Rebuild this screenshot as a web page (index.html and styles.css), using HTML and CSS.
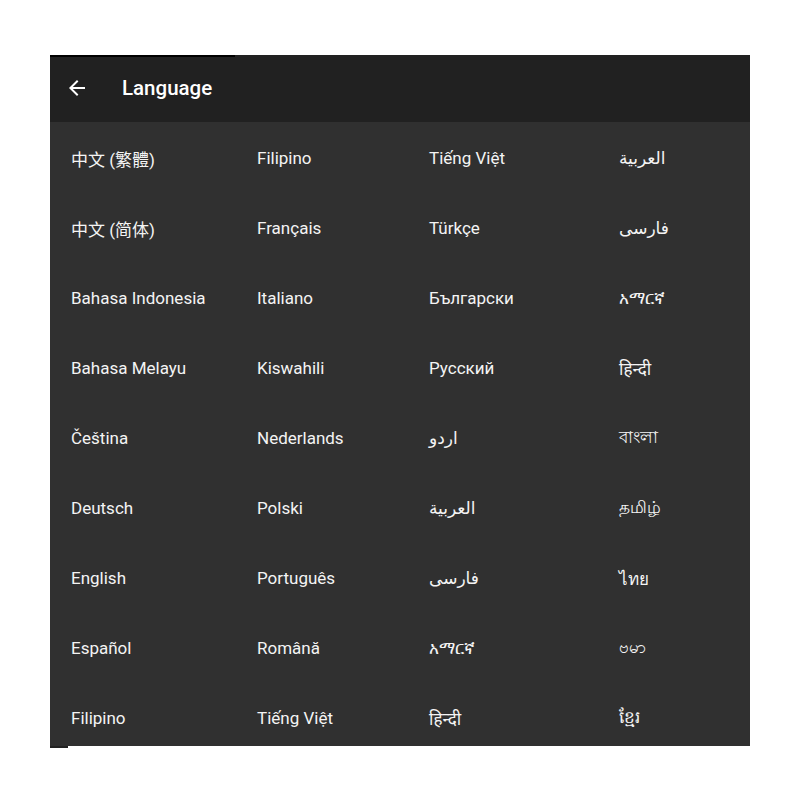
FILE: index.html
```html
<!DOCTYPE html>
<html>
<head>
<meta charset="utf-8">
<link rel="stylesheet" href="styles.css">
</head>
<body>
<div class="panel">
  <div class="header">
    <div class="progress"></div>
    <div class="bar">
      <svg class="back" width="24" height="24" viewBox="0 0 24 24"><path d="M20 11H7.83l5.59-5.59L12 4l-8 8 8 8 1.41-1.41L7.83 13H20v-2z" fill="#fff"/></svg>
      <span class="title">Language</span>
    </div>
  </div>
  <div class="list">
    <div class="grid">
      <span>中文 (繁體)</span><span>Filipino</span><span>Tiếng Việt</span><span>العربية</span>
      <span>中文 (简体)</span><span>Français</span><span>Türkçe</span><span>فارسی</span>
      <span>Bahasa Indonesia</span><span>Italiano</span><span>Български</span><span>አማርኛ</span>
      <span>Bahasa Melayu</span><span>Kiswahili</span><span>Русский</span><span>हिन्दी</span>
      <span>Čeština</span><span>Nederlands</span><span>اردو</span><span>বাংলা</span>
      <span>Deutsch</span><span>Polski</span><span>العربية</span><span>தமிழ்</span>
      <span>English</span><span>Português</span><span>فارسی</span><span>ไทย</span>
      <span>Español</span><span>Română</span><span>አማርኛ</span><span>ဗမာ</span>
      <span>Filipino</span><span>Tiếng Việt</span><span>हिन्दी</span><span>ខ្មែរ</span>
    </div>
  </div>
  <div class="foot"></div>
</div>
</body>
</html>
```
FILE: styles.css
```css
html, body {
  margin: 0;
  padding: 0;
  background: #ffffff;
}
body {
  padding: 55px 50px 0 50px;
  font-family: Roboto, "Noto Sans", "DejaVu Sans", "Noto Sans CJK SC", sans-serif;
}
.panel {
  width: 700px;
  position: relative;
}
.header {
  background: #212121;
  height: 67px;
  display: flex;
  flex-direction: column;
}
.progress {
  width: 185px;
  height: 2px;
  background: #000;
}
.bar {
  flex: 1;
  display: flex;
  align-items: center;
  padding-left: 15px;
  padding-bottom: 4px;
}
.back {
  width: 24px;
  height: 24px;
}
.title {
  margin-left: 33px;
  color: #fff;
  font-size: 20.5px;
  font-weight: 500;
}
.list {
  background: #303030;
  height: 624px;
  overflow: hidden;
}
.grid {
  display: grid;
  grid-template-columns: 186px 172px 190px 1fr;
  grid-auto-rows: 70px;
  padding-left: 21px;
  padding-top: 1px;
  align-items: center;
}
.grid span {
  color: #f4f4f4;
  font-size: 17px;
  font-weight: 400;
  white-space: nowrap;
}
.foot {
  width: 18px;
  height: 2px;
  background: #222;
}
```
